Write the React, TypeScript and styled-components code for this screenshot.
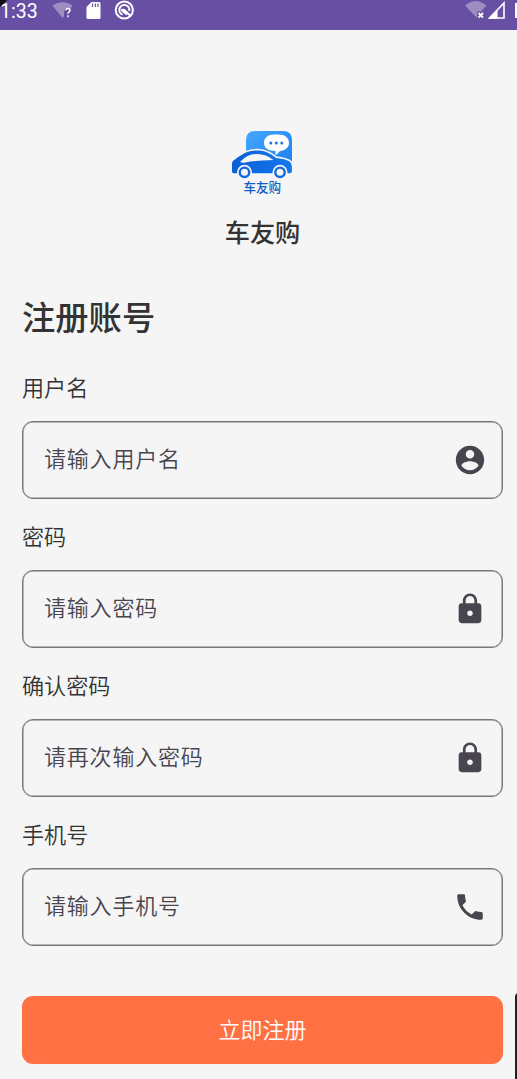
import React from 'react';
import styled, { createGlobalStyle } from 'styled-components';

const GlobalStyle = createGlobalStyle`
  * { box-sizing: border-box; }
  html, body { margin: 0; padding: 0; background: #f5f5f5; }
  body { font-family: Roboto, "Noto Sans CJK SC", sans-serif; overflow: hidden; }
`;

const Screen = styled.div`
  position: relative;
  width: 517px;
  height: 1079px;
  overflow: hidden;
  background: #f5f5f5;
`;

const StatusBar = styled.header`
  height: 30px;
  background: #6750a4;
  color: #fff;
  display: flex;
  justify-content: space-between;
  overflow: hidden;
`;

const StatusGroup = styled.div`
  display: flex;
  align-items: flex-start;
`;

const Clock = styled.span`
  font-size: 19.5px;
  line-height: 23px;
  width: 45px;
`;

const Main = styled.main`
  display: flex;
  flex-direction: column;
  padding: 96px 14px 0 22px;
`;

const Brand = styled.div`
  display: flex;
  flex-direction: column;
  align-items: center;
  color: #333;
`;

const BrandName = styled.div`
  margin-top: 18px;
  font-size: 25.2px;
  font-weight: 500;
  line-height: 36px;
`;

const Title = styled.h1`
  margin: 43px 0 0;
  font-size: 33.3px;
  font-weight: 500;
  line-height: 48px;
  color: #333;
`;

const Form = styled.form`
  display: flex;
  flex-direction: column;
  gap: 21px;
  margin-top: 28px;
`;

const Field = styled.label`
  display: flex;
  flex-direction: column;
  gap: 16px;
`;

const FieldLabel = styled.span`
  font-size: 22.1px;
  font-weight: 350;
  line-height: 34px;
  color: #333;
`;

const InputBox = styled.span`
  display: flex;
  align-items: center;
  justify-content: space-between;
  height: 78px;
  padding: 0 15px 1px 21px;
  border: 1px solid #79747e;
  box-shadow: inset 0 0 0 0.5px #79747e;
  border-radius: 11px;
`;

const Placeholder = styled.span`
  font-size: 22px;
  font-weight: 350;
  letter-spacing: 0.8px;
  line-height: 34px;
  color: #49454f;
`;

const Submit = styled.button`
  margin-top: 29px;
  height: 68px;
  padding: 2px 0 0;
  border: 0;
  border-radius: 11px;
  background: #ff7043;
  color: #fff;
  font: 350 22px/34px Roboto, "Noto Sans CJK SC", sans-serif;
`;

const EdgeHandle = styled.div`
  position: absolute;
  left: 514.5px;
  top: 993px;
  width: 12px;
  height: 100px;
  border-radius: 4px;
  background: #222;
`;

const paths = {
  user: 'M12 2C6.48 2 2 6.48 2 12s4.48 10 10 10 10-4.48 10-10S17.52 2 12 2zm0 3c1.66 0 3 1.34 3 3s-1.34 3-3 3-3-1.34-3-3 1.34-3 3-3zm0 14.2c-2.5 0-4.71-1.28-6-3.22.03-1.99 4-3.08 6-3.08 1.99 0 5.97 1.09 6 3.08-1.29 1.94-3.5 3.22-6 3.22z',
  lock: 'M18 8h-1V6c0-2.76-2.24-5-5-5S7 3.24 7 6v2H6c-1.1 0-2 .9-2 2v10c0 1.1.9 2 2 2h12c1.1 0 2-.9 2-2V10c0-1.1-.9-2-2-2zm-6 9c-1.1 0-2-.9-2-2s.9-2 2-2 2 .9 2 2-.9 2-2 2zm3.1-9H8.9V6c0-1.71 1.39-3.1 3.1-3.1 1.71 0 3.1 1.39 3.1 3.1v2z',
  phone: 'M6.62 10.79c1.44 2.83 3.76 5.14 6.59 6.59l2.2-2.2c.27-.27.67-.36 1.02-.24 1.12.37 2.33.57 3.57.57.55 0 1 .45 1 1V20c0 .55-.45 1-1 1-9.39 0-17-7.61-17-17 0-.55.45-1 1-1h3.5c.55 0 1 .45 1 1 0 1.25.2 2.45.57 3.57.11.35.03.74-.25 1.02l-2.2 2.2z',
};

const fields: { label: string; hint: string; icon: keyof typeof paths }[] = [
  { label: '用户名', hint: '请输入用户名', icon: 'user' },
  { label: '密码', hint: '请输入密码', icon: 'lock' },
  { label: '确认密码', hint: '请再次输入密码', icon: 'lock' },
  { label: '手机号', hint: '请输入手机号', icon: 'phone' },
];

const Logo = () => (
  <svg width="70" height="72" viewBox="0 0 70 72">
    <defs>
      <linearGradient id="card" x1="0" y1="0" x2="1" y2="1">
        <stop offset="0" stopColor="#45a8fd" />
        <stop offset="1" stopColor="#1a7cf0" />
      </linearGradient>
      <linearGradient id="body" x1="0" y1="0" x2="1" y2="0">
        <stop offset="0" stopColor="#0a5fd6" />
        <stop offset="1" stopColor="#1479ef" />
      </linearGradient>
    </defs>
    <path d="M18 32V14q0-9 9-9h28q9 0 9 9v32H18z" fill="url(#card)" />
    <path d="M46 8.500h4.500c6.500 0 10.500 3.500 10.500 8.300s-4 8-9 8.300L47.500 29.500V25C40 25 36 22 36 16.800s4-8.300 10-8.300z" fill="#fff" />
    <g fill="#1877ee">
      <circle cx="42.800" cy="17" r="1.500" />
      <circle cx="48.300" cy="17" r="1.500" />
      <circle cx="53.800" cy="17" r="1.500" />
    </g>
    <path d="M6 47.500q-2 0-2-2.500V38q0-3 3-4.500C14 28 20 24.500 29 24.500c8 0 13 2.500 19 7.500 7 .8 12 2 14.500 4.500 1.500 2 1.500 5 1.500 8q0 3-3 3z" fill="url(#body)" stroke="#f5f5f5" strokeWidth="3.500" paintOrder="stroke" />
    <path d="M12 36C17.500 30.500 22 28 29 28c6.500 0 11.500 2.200 16.500 6-11 .5-21 1-28 2.500-2 .4-4 .3-5.500-.5z" fill="#f5f5f5" />
    <path d="M2 49h64" stroke="#f5f5f5" strokeWidth="3" />
    <g fill="#f5f5f5">
      <circle cx="16.500" cy="46.300" r="7.500" />
      <circle cx="52" cy="46.300" r="7.500" />
    </g>
    <g fill="#f5f5f5" stroke="#1268de" strokeWidth="2.400">
      <circle cx="16.500" cy="46.300" r="4.700" />
      <circle cx="52" cy="46.300" r="4.700" />
    </g>
    <text x="34.300" y="66.400" textAnchor="middle" fontSize="12.600" fontWeight="500" fill="#0c5ec8" fontFamily='"Noto Sans CJK SC", sans-serif'>车友购</text>
  </svg>
);

const LeftIcons = () => (
  <svg width="95" height="24" viewBox="0 0 95 24">
    <path d="M7.300 5.500Q17.500-1.500 27.700 5.500L25.500 8.200H20.500L19 12v4.300L17.500 18z" fill="#fff" opacity=".35" />
    <path d="M21 10.300q0-1.900 2-1.900t2 1.900c0 1.400-2 1.500-2 3.400M23 15.300v2" fill="none" stroke="#fff" strokeWidth="1.500" />
    <path d="M46.500 2h7.500q1.500 0 1.500 1.500v14q0 1.500-1.500 1.500h-11q-1.500 0-1.500-1.500V7z" fill="#fff" />
    <path d="M47.500 3.500v3.500M50.300 3.500v3.500M53 3.500v3.500" stroke="#6750a4" strokeWidth="1.200" />
    <g fill="none" stroke="#fff">
      <circle cx="79.300" cy="10" r="8.600" strokeWidth="2" />
      <path d="M77.500 14.600A5 5 0 1 1 84.200 11" strokeWidth="2" />
      <path d="M76 10.500q2.500-1.500 4.500.5l4.500 4.500M77 10.500l5 4" strokeWidth="2" />
    </g>
  </svg>
);

const RightIcons = () => (
  <svg width="57" height="24" viewBox="0 0 57 24">
    <path d="M5 5.500Q15.500-3.500 26.500 5.500L21 11.500h-4V18z" fill="#fff" opacity=".35" />
    <path d="M18.500 13l4.500 4.500M23 13l-4.500 4.500" stroke="#fff" strokeWidth="1.800" />
    <path d="M29.500 18L44 3v15z" fill="none" stroke="#fff" strokeWidth="1.600" />
    <path d="M28 18.700l9.500-9.500v9.500z" fill="#fff" />
    <rect x="55" y="3" width="5" height="15" fill="#fff" />
  </svg>
);

const ScreenCorner = styled.div`
  position: absolute;
  left: 0;
  top: 0;
  width: 7px;
  height: 7px;
  background: linear-gradient(135deg, #111 48%, transparent 54%);
`;

export default function App() {
  return (
    <Screen>
      <GlobalStyle />
      <StatusBar>
        <StatusGroup><Clock>1:33</Clock><LeftIcons /></StatusGroup>
        <StatusGroup><RightIcons /></StatusGroup>
      </StatusBar>
      <ScreenCorner />
      <Main>
        <Brand>
          <Logo />
          <BrandName>车友购</BrandName>
        </Brand>
        <Title>注册账号</Title>
        <Form>
          {fields.map((f) => (
            <Field key={f.label}>
              <FieldLabel>{f.label}</FieldLabel>
              <InputBox>
                <Placeholder>{f.hint}</Placeholder>
                <svg width="34" height="34" viewBox="0 0 24 24" fill="#49454f"><path d={paths[f.icon]} /></svg>
              </InputBox>
            </Field>
          ))}
          <Submit type="button">立即注册</Submit>
        </Form>
      </Main>
      <EdgeHandle />
    </Screen>
  );
}
